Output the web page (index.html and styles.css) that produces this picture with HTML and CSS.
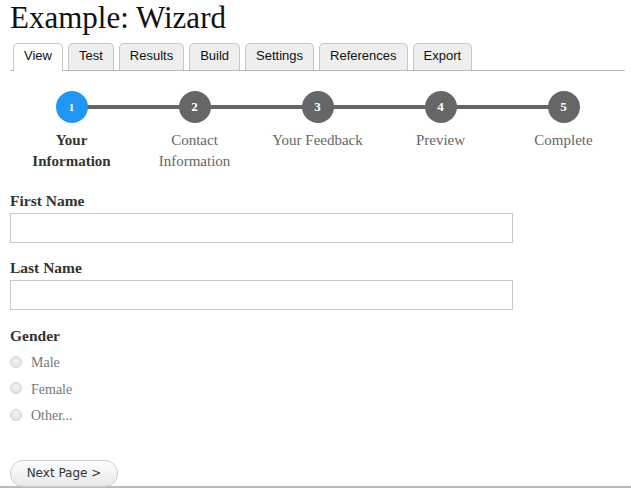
FILE: index.html
```html
<!DOCTYPE html>
<html>
<head>
<meta charset="utf-8">
<link rel="stylesheet" href="styles.css">
</head>
<body>
<h1 class="title">Example: Wizard</h1>
<ul class="tabs">
  <li class="tab active">View</li>
  <li class="tab">Test</li>
  <li class="tab">Results</li>
  <li class="tab">Build</li>
  <li class="tab">Settings</li>
  <li class="tab">References</li>
  <li class="tab">Export</li>
</ul>
<ol class="steps">
  <li class="step current"><span class="dot">1</span><span class="step-label">Your Information</span></li>
  <li class="step"><span class="dot">2</span><span class="step-label">Contact Information</span></li>
  <li class="step"><span class="dot">3</span><span class="step-label">Your Feedback</span></li>
  <li class="step"><span class="dot">4</span><span class="step-label">Preview</span></li>
  <li class="step"><span class="dot">5</span><span class="step-label">Complete</span></li>
</ol>
<form class="form">
  <div class="field">
    <label class="field-label" for="first">First Name</label>
    <input class="text-input" id="first" type="text">
  </div>
  <div class="field">
    <label class="field-label" for="last">Last Name</label>
    <input class="text-input" id="last" type="text">
  </div>
  <div class="field">
    <div class="field-label">Gender</div>
    <label class="radio-row"><input class="radio" type="radio" name="g"><span>Male</span></label>
    <label class="radio-row"><input class="radio" type="radio" name="g"><span>Female</span></label>
    <label class="radio-row"><input class="radio" type="radio" name="g"><span>Other...</span></label>
  </div>
  <div class="pager">
    <button class="next-btn" type="button">Next Page &gt;</button>
  </div>
</form>
<div class="footer"></div>
</body>
</html>
```
FILE: styles.css
```css
html, body {
  margin: 0;
  background: #fff;
}
body {
  padding: 0 6px 0 10px;
  font-family: "Liberation Serif", "Times New Roman", serif;
  color: #333;
  overflow: hidden;
}
.title {
  margin: 0;
  font-size: 31px;
  font-weight: normal;
  line-height: 36px;
  color: #111;
}
.tabs {
  list-style: none;
  margin: 7px 0 0;
  padding: 0 0 0 3px;
  display: flex;
  gap: 5px;
  border-bottom: 1px solid #bbb;
  height: 27px;
}
.tab {
  box-sizing: border-box;
  height: 27px;
  padding: 0 10px;
  border: 1px solid #c6c6c6;
  border-bottom: none;
  border-radius: 5px 5px 0 0;
  background: #eee;
  font-family: "Liberation Sans", Arial, sans-serif;
  font-size: 13px;
  line-height: 24px;
  color: #111;
}
.tab.active {
  background: #fff;
  height: 28px;
}
.steps {
  list-style: none;
  margin: 20px 0 0;
  padding: 0;
  display: grid;
  grid-template-columns: repeat(5, 1fr);
  position: relative;
}
.steps::before {
  content: "";
  position: absolute;
  left: 10%;
  right: 10%;
  top: 14px;
  height: 4px;
  background: #666;
}
.step {
  display: flex;
  flex-direction: column;
  align-items: center;
  text-align: center;
  position: relative;
}
.dot {
  width: 32px;
  height: 32px;
  border-radius: 50%;
  background: #666;
  color: #fff;
  font-weight: bold;
  font-size: 13px;
  line-height: 32px;
  text-align: center;
}
.step.current .dot {
  background: #2196f3;
  font-size: 11px;
}
.step-label {
  margin-top: 7px;
  font-size: 15px;
  line-height: 21px;
  color: #666;
  width: 100px;
}
.step.current .step-label {
  color: #333;
  font-weight: bold;
}
.form {
  margin-top: 19px;
}
.field {
  margin-bottom: 15px;
}
.field + .field + .field {
  margin-top: 16px;
}
.field-label {
  display: block;
  font-size: 15.5px;
  font-weight: bold;
  line-height: 20px;
  color: #333;
  margin-bottom: 2px;
}
.text-input {
  display: block;
  box-sizing: border-box;
  width: 503px;
  height: 30px;
  margin: 0;
  border: 1px solid #c8c8c8;
  background: #fff;
  outline: none;
}
.radio-row {
  display: flex;
  align-items: center;
  height: 26.5px;
  font-size: 14px;
  color: #777;
}
.radio-row:first-of-type {
  margin-top: 4px;
}
.radio {
  appearance: none;
  -webkit-appearance: none;
  box-sizing: border-box;
  width: 12px;
  height: 12px;
  margin: -3px 9px 0 0;
  border: 1px solid #d4d4d4;
  border-radius: 50%;
  background: radial-gradient(circle at 50% 40%, #f4f4f4, #dcdcdc);
}
.pager {
  margin-top: 30px;
  display: flex;
}
.next-btn {
  box-sizing: border-box;
  width: 108px;
  height: 27px;
  margin: 0;
  padding: 0;
  border: 1px solid #cdcdcd;
  border-radius: 13px;
  background: linear-gradient(#fdfdfd, #e9e9e9);
  font-family: "DejaVu Sans", Verdana, sans-serif;
  font-size: 12px;
  color: #333;
  position: relative;
  z-index: 1;
}
.footer {
  margin: -1px -6px 0 -10px;
  border-top: 2px solid #bbb;
}
```
